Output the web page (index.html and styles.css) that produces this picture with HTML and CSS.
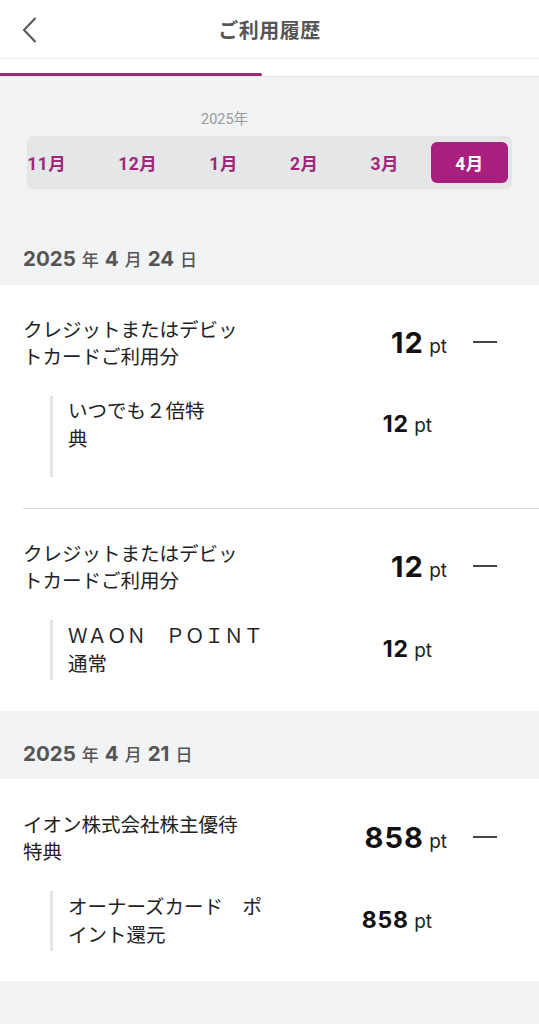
FILE: index.html
```html
<!DOCTYPE html>
<html lang="ja">
<head>
<meta charset="utf-8">
<link rel="stylesheet" href="styles.css">
</head>
<body>
<header class="topbar">
  <svg class="back" width="16" height="26" viewBox="0 0 16 26"><path d="M13 1.5 L2 13 L13 24.5" fill="none" stroke="#555" stroke-width="2" stroke-linecap="round" stroke-linejoin="round"/></svg>
  <h1 class="title">ご利用履歴</h1>
</header>
<div class="tabs"><div class="tab-indicator"></div></div>
<main class="page">
  <section class="months-wrap">
    <div class="year">2025年</div>
    <div class="months">
      <span class="month">11月</span>
      <span class="month">12月</span>
      <span class="month">1月</span>
      <span class="month">2月</span>
      <span class="month">3月</span>
      <span class="month active">4月</span>
    </div>
  </section>

  <div class="date"><b>2025</b><span>年</span><b>4</b><span>月</span><b>24</b><span>日</span></div>
  <section class="card">
    <div class="item">
      <div class="row">
        <div class="name">クレジットまたはデビッ<br>トカードご利用分</div>
        <div class="amount"><b>12</b> pt</div>
        <span class="minus"></span>
      </div>
      <div class="sub sub-tall">
        <div class="sub-row">
          <div class="sub-name">いつでも２倍特<br>典</div>
          <div class="sub-amount"><b>12</b> pt</div>
        </div>
      </div>
    </div>
    <div class="divider"></div>
    <div class="item">
      <div class="row">
        <div class="name">クレジットまたはデビッ<br>トカードご利用分</div>
        <div class="amount"><b>12</b> pt</div>
        <span class="minus"></span>
      </div>
      <div class="sub">
        <div class="sub-row">
          <div class="sub-name">ＷＡＯＮ　ＰＯＩＮＴ<br>通常</div>
          <div class="sub-amount"><b>12</b> pt</div>
        </div>
      </div>
    </div>
  </section>

  <div class="date"><b>2025</b><span>年</span><b>4</b><span>月</span><b>21</b><span>日</span></div>
  <section class="card">
    <div class="item">
      <div class="row">
        <div class="name">イオン株式会社株主優待<br>特典</div>
        <div class="amount"><b>858</b> pt</div>
        <span class="minus"></span>
      </div>
      <div class="sub">
        <div class="sub-row">
          <div class="sub-name">オーナーズカード　ポ<br>イント還元</div>
          <div class="sub-amount"><b>858</b> pt</div>
        </div>
      </div>
    </div>
  </section>
</main>
</body>
</html>
```

FILE: styles.css
```css
* { box-sizing: border-box; margin: 0; padding: 0; }
html, body { background: #f1f3f4; }
body {
  width: 539px;
  font-family: "Noto Sans CJK JP", "Noto Sans", sans-serif;
  color: #222;
  overflow: hidden;
}
.topbar {
  height: 59px;
  background: #fff;
  border-bottom: 1px solid #ececec;
  display: flex;
  align-items: center;
  justify-content: center;
  position: relative;
}
.back {
  position: absolute;
  left: 22px;
  top: 17px;
}
.title {
  font-size: 20px;
  font-weight: 700;
  color: #555;
  letter-spacing: 0.5px;
}
.tabs {
  height: 18px;
  background: #fff;
  border-bottom: 1px solid #e6e8ea;
  display: flex;
  align-items: flex-end;
}
.tab-indicator {
  width: 262px;
  height: 3px;
  background: #9b2a73;
  border-radius: 0 2px 2px 0;
}
.months-wrap {
  padding: 34px 27px 0;
}
.year {
  font-family: "Roboto", "Noto Sans CJK JP", sans-serif;
  font-size: 14.5px;
  color: #9a9a9a;
  line-height: 17px;
  padding-left: 174px;
  margin-bottom: 8px;
}
.months {
  height: 53px;
  background: #e4e6e8;
  border-radius: 6px;
  padding: 6px 4px;
  display: flex;
  justify-content: flex-end;
  gap: 12px;
  overflow: hidden;
}
.month {
  flex: none;
  height: 41px;
  padding: 0 20px;
  display: flex;
  align-items: center;
  font-family: "Roboto", "Noto Sans CJK JP", sans-serif;
  font-weight: 700;
  font-size: 17.5px;
  color: #a0287a;
  letter-spacing: 0.5px;
  border-radius: 6px;
}
.month.active {
  background: #a81f7d;
  color: #fff;
  width: 77px;
  justify-content: center;
}
.date {
  padding: 58px 23px 14px;
  color: #555;
  line-height: 24px;
  font-family: "Inter", "Noto Sans CJK JP", sans-serif;
  display: flex;
  align-items: baseline;
}
.date b {
  font-size: 20.5px;
  font-weight: 700;
}
.date span {
  font-family: "Noto Sans CJK JP", sans-serif;
  font-size: 17px;
  font-weight: 500;
  margin: 0 6px;
}
.card ~ .date { padding-top: 31px; padding-bottom: 13px; }
.card {
  background: #fff;
  padding: 0 0 0 23px;
}
.item {
  padding: 30px 0 31px;
}
.card:last-child .item { padding-top: 31px; padding-bottom: 30px; }
.row {
  display: flex;
  align-items: center;
}
.name {
  width: 240px;
  font-size: 19.5px;
  line-height: 27px;
  color: #222;
}
.amount {
  flex: 1;
  text-align: right;
  font-family: "Inter", "Roboto", sans-serif;
  font-size: 19px;
  color: #222;
}
.amount b {
  font-size: 29px;
  font-weight: 700;
  letter-spacing: 1px;
  color: #111;
}
.minus {
  width: 24px;
  height: 2px;
  background: #444;
  margin: 0 42px 0 26px;
}
.sub {
  margin: 27px 0 0 27px;
  border-left: 3px solid #e5e5e5;
  padding: 1px 0 3px 15px;
}
.sub-tall { padding-bottom: 25px; padding-top: 0; }
.sub-row {
  display: flex;
  align-items: center;
}
.sub-name {
  font-size: 19.5px;
  line-height: 28px;
  color: #222;
  width: 230px;
  white-space: nowrap;
}
.sub-amount {
  flex: 1;
  text-align: right;
  padding-right: 107px;
  font-family: "Inter", "Roboto", sans-serif;
  font-size: 19px;
  color: #222;
}
.sub-amount b {
  font-size: 23px;
  font-weight: 700;
  letter-spacing: 0.8px;
  color: #111;
}
.divider {
  height: 1px;
  background: #dcdcdc;
}
```
